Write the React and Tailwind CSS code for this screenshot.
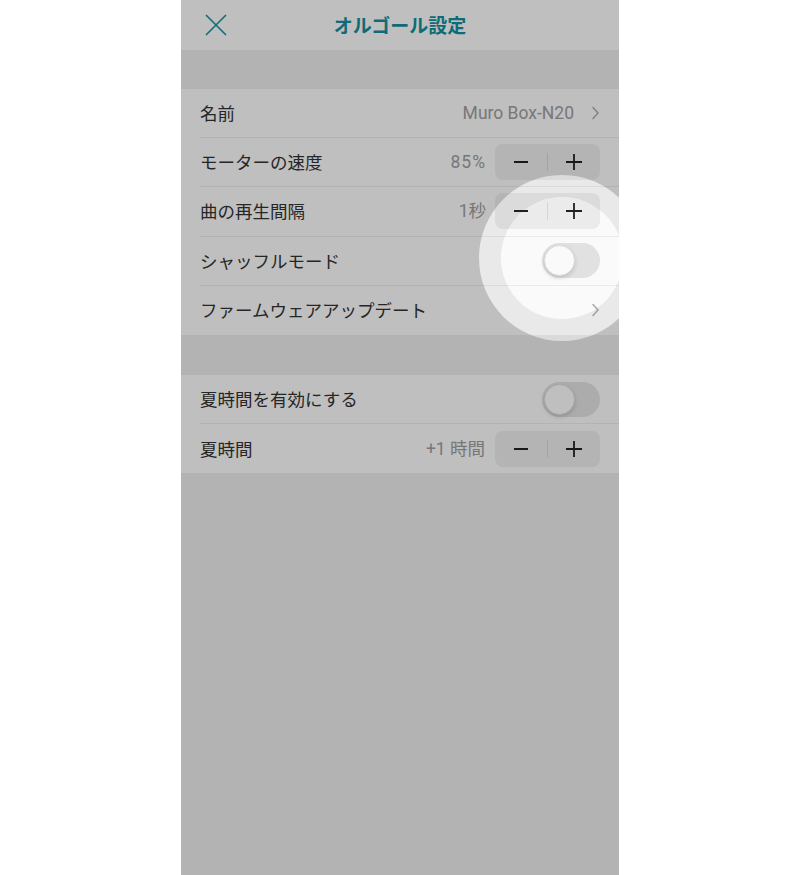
import React from 'react';

const TEAL = '#15909f';

function Chevron() {
  return (
    <svg width="9" height="14" viewBox="0 0 9 14" fill="none">
      <path d="M2 1.5L7 7L2 12.5" stroke="#b0b0b0" strokeWidth="1.6" strokeLinecap="round" strokeLinejoin="round" />
    </svg>
  );
}

function Stepper() {
  return (
    <div className="flex items-center w-[105px] h-[36px] rounded-[8px] bg-[#f0f0f0]">
      <div className="flex-1 flex items-center justify-center">
        <svg width="16" height="16" viewBox="0 0 16 16">
          <path d="M1 8H15" stroke="#222" strokeWidth="2" />
        </svg>
      </div>
      <div className="w-px h-[18px] bg-[#dadada]" />
      <div className="flex-1 flex items-center justify-center">
        <svg width="18" height="18" viewBox="0 0 18 18">
          <path d="M1 9H17M9 1V17" stroke="#222" strokeWidth="1.8" />
        </svg>
      </div>
    </div>
  );
}

function Toggle() {
  return (
    <div className="w-[58px] h-[35px] rounded-full bg-[#e6e6e6] flex items-center px-[2px]">
      <div className="w-[31px] h-[31px] rounded-full bg-white border border-[#e0e0e0] shadow-[0_2px_4px_rgba(0,0,0,0.15)]" />
    </div>
  );
}

function Value({ children, className = '' }) {
  return (
    <span className={`font-['Roboto','Noto_Sans_CJK_JP',sans-serif] text-[17.5px] text-[#a0a0a0] ${className}`}>
      {children}
    </span>
  );
}

function Row({ label, last, children }) {
  return (
    <div className="h-[49.2px] bg-white pl-[19px] flex">
      <div className={`flex-1 flex items-center justify-between pr-[19px] ${last ? '' : 'border-b border-[#efefef]'}`}>
        <span className="text-[17.5px] text-[#333]">{label}</span>
        <div className="flex items-center">{children}</div>
      </div>
    </div>
  );
}

export default function App() {
  return (
    <div className="w-full h-[875px] bg-white font-['Noto_Sans_CJK_JP',sans-serif]">
      <div className="relative mx-auto w-[438px] h-[875px] bg-[#efefef] overflow-hidden">
        <div className="h-[50px] bg-white grid grid-cols-[70px_1fr_70px] items-center">
          <div className="pl-[24px] flex items-center">
            <svg width="22" height="22" viewBox="0 0 22 22">
              <path d="M1 1L21 21M21 1L1 21" stroke={TEAL} strokeWidth="1.6" />
            </svg>
          </div>
          <div className="text-center text-[19px] font-bold leading-[48px]" style={{ color: TEAL }}>オルゴール設定</div>
          <div />
        </div>

        <div className="h-[39px]" />

        <Row label="名前">
          <Value className="mr-[17px]">Muro Box-N20</Value>
          <Chevron />
        </Row>
        <Row label="モーターの速度">
          <Value className="mr-[9px] tracking-[1px]">85%</Value>
          <Stepper />
        </Row>
        <Row label="曲の再生間隔">
          <Value className="mr-[9px]">1秒</Value>
          <Stepper />
        </Row>
        <Row label="シャッフルモード">
          <Toggle />
        </Row>
        <Row label="ファームウェアアップデート" last>
          <Chevron />
        </Row>

        <div className="h-[40px]" />

        <Row label="夏時間を有効にする">
          <Toggle />
        </Row>
        <Row label="夏時間" last>
          <Value className="mr-[10px]">+1 時間</Value>
          <Stepper />
        </Row>

        {/* spotlight overlay */}
        <div className="absolute left-[298px] top-[175px] w-[166px] h-[166px] rounded-full border-[22px] border-black/[0.085] bg-black/[0.02] bg-clip-padding shadow-[0_0_0_1200px_rgba(0,0,0,0.25)]" />
      </div>
    </div>
  );
}
